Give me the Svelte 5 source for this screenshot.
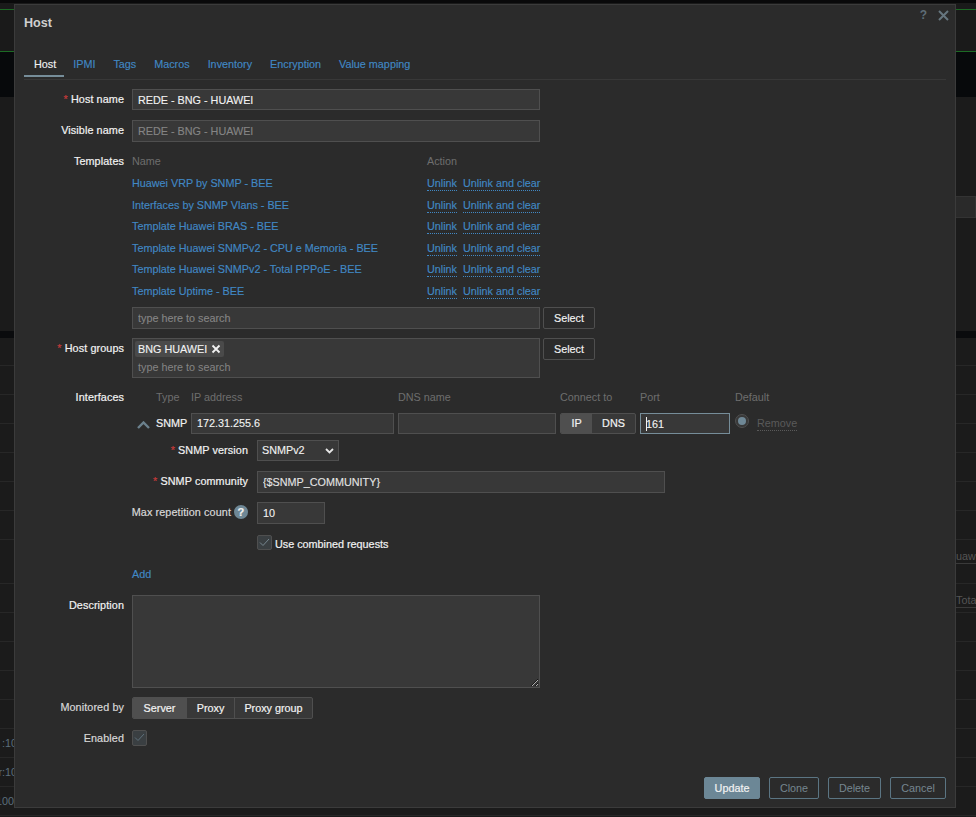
<script>
  const tabs = ['Host', 'IPMI', 'Tags', 'Macros', 'Inventory', 'Encryption', 'Value mapping'];
  const templates = [
    'Huawei VRP by SNMP - BEE',
    'Interfaces by SNMP Vlans - BEE',
    'Template Huawei BRAS - BEE',
    'Template Huawei SNMPv2 - CPU e Memoria - BEE',
    'Template Huawei SNMPv2 - Total PPPoE - BEE',
    'Template Uptime - BEE'
  ];
  const bgRows = [
    { h: 28 }, { h: 29 }, { h: 29 }, { h: 29 }, { h: 29 }, { h: 29 }, { h: 29 },
    { h: 44, right: 'uaw', top: true },
    { h: 29, right: 'Tota', top: true },
    { h: 29 }, { h: 29 }, { h: 29 }, { h: 29 },
    { h: 29, left: ':10', cut: true }, { h: 29, left: 'r:10', cut: true }, { h: 29, left: '100' }
  ];
</script>

<div class="page">
  <div class="bg">
    <div class="strip"></div>
    <div class="bg-green1"></div>
    <div class="bg-green2"></div>
    <div class="bg-upper">
      <div class="bg-field"></div>
    </div>
    <div class="bg-band"></div>
    {#each bgRows as r}
      <div class="bg-row" class:top={r.top} style="height:{r.h}px">
        <span class="bg-left"><span class:cut={r.cut}>{r.left ?? ''}</span></span>
        {#if r.right}<span class="bg-right">{r.right}</span>{/if}
      </div>
    {/each}
  </div>

  <div class="modal">
    <div class="head-icons">
      <span class="help">?</span>
      <svg width="11" height="11" viewBox="0 0 11 11"><path d="M1 1l9 9M10 1l-9 9" stroke="#66767f" stroke-width="2" fill="none"/></svg>
    </div>
    <h1>Host</h1>
    <nav class="tabs">
      {#each tabs as t, i}
        <span class="tab" class:active={i === 0}>{t}</span>
      {/each}
    </nav>

    <div class="form">
      <div class="row r-host">
        <div class="lbl"><i>*</i> Host name</div>
        <input class="field w408 h21" value="REDE - BNG - HUAWEI" />
      </div>
      <div class="row r-visible">
        <div class="lbl">Visible name</div>
        <input class="field w408 h22 dim" value="REDE - BNG - HUAWEI" />
      </div>

      <div class="row r-templates">
        <div class="lbl">Templates</div>
        <div>
          <div class="tpl-row th"><span>Name</span><span>Action</span></div>
          {#each templates as t}
            <div class="tpl-row">
              <span class="link">{t}</span>
              <span class="actions"><span class="dot">Unlink</span><span class="dot">Unlink and clear</span></span>
            </div>
          {/each}
          <div class="with-btn tpl-search">
            <input class="field w408 h22" placeholder="type here to search" />
            <button class="btn-select">Select</button>
          </div>
        </div>
      </div>

      <div class="row r-groups">
        <div class="lbl"><i>*</i> Host groups</div>
        <div class="with-btn">
          <div class="multi">
            <span class="tag">BNG HUAWEI
              <svg width="10" height="10" viewBox="0 0 10 10"><path d="M1.5 1.5l7 7M8.5 1.5l-7 7" stroke="#f2f2f2" stroke-width="1.8" fill="none"/></svg>
            </span>
            <span class="ph">type here to search</span>
          </div>
          <button class="btn-select">Select</button>
        </div>
      </div>

      <div class="row r-if">
        <div class="lbl lbl-if">Interfaces</div>
        <div>
          <div class="if-grid if-head">
            <span></span><span>Type</span><span>IP address</span><span>DNS name</span><span>Connect to</span><span>Port</span><span class="def">Default</span>
          </div>
          <div class="if-grid if-body">
            <svg class="chev" width="13" height="8" viewBox="0 0 13 8"><path d="M1 7l5.5-5.5L12 7" stroke="#6b818d" stroke-width="2.4" fill="none"/></svg>
            <span class="snmp">SNMP</span>
            <input class="field h21 full" value="172.31.255.6" />
            <input class="field h21 full" />
            <div class="seg h21">
              <span class="on s-ip">IP</span><span class="s-dns">DNS</span>
            </div>
            <div class="field h21 full port"><span class="caret"></span>161</div>
            <div class="def-cell">
              <span class="radio"><b></b></span>
              <span class="remove">Remove</span>
            </div>
          </div>

          <div class="sub s1">
            <div class="sl"><i>*</i> SNMP version</div>
            <div class="sel">
              <select class="field h21"><option>SNMPv2</option></select>
              <svg width="9" height="6" viewBox="0 0 9 6"><path d="M1 1l3.5 3.5L8 1" stroke="#e6e6e6" stroke-width="1.8" fill="none"/></svg>
            </div>
          </div>
          <div class="sub s2">
            <div class="sl up"><i>*</i> SNMP community</div>
            <input class="field h22 w408 soft" value={'{$SNMP_COMMUNITY}'} />
          </div>
          <div class="sub s3">
            <div class="sl up soft-l">Max repetition count <span class="q">?</span></div>
            <input class="field h22 w68" value="10" />
          </div>
          <div class="sub s4">
            <div class="sl"></div>
            <label class="chk-line">
              <span class="chk c15">
                <svg width="11" height="9" viewBox="0 0 11 9"><path d="M1 4.5l3 3L10 1" stroke="#76868f" stroke-width="1" fill="none"/></svg>
              </span>
              <span class="chk-text">Use combined requests</span>
            </label>
          </div>
          <div class="add"><span class="link">Add</span></div>
        </div>
      </div>

      <div class="row r-desc">
        <div class="lbl">Description</div>
        <textarea class="area"></textarea>
      </div>

      <div class="row r-mon">
        <div class="lbl soft-l">Monitored by</div>
        <div class="seg seg-mon">
          <span class="on m1">Server</span><span class="m2">Proxy</span><span class="m3">Proxy group</span>
        </div>
      </div>

      <div class="row r-en">
        <div class="lbl lbl-en soft-l">Enabled</div>
        <span class="chk c16">
          <svg width="11" height="9" viewBox="0 0 11 9"><path d="M1 4.5l3 3L10 1" stroke="#5d6f7a" stroke-width="1" fill="none"/></svg>
        </span>
      </div>
    </div>

    <footer>
      <button class="primary">Update</button>
      <button class="ghost b-clone">Clone</button>
      <button class="ghost b-del">Delete</button>
      <button class="ghost b-can">Cancel</button>
    </footer>
  </div>
</div>

<style>
  :global(body) { margin: 0; background: #1a1a1a; }
  .page {
    position: relative;
    width: 976px;
    height: 817px;
    overflow: hidden;
    font: 10.8px/14px "Liberation Sans", Arial, sans-serif;
    color: #f2f2f2;
  }

  /* dimmed page behind the dialog */
  .bg { height: 817px; background: #1b1b1b; overflow: hidden; }
  .strip { height: 3px; background: #09090a; }
  .bg-green1 { height: 6px; border-bottom: 1px solid #1c6a24; background: #1a1a1a; }
  .bg-green2 { height: 41px; border-bottom: 1px solid #1c6a24; background: #1a1a1a; }
  .bg-upper {
    height: 279px;
    background: linear-gradient(#07090b 0, #07090b 45px, #1b1b1b 45px);
    display: flow-root;
  }
  .bg-field {
    margin: 144px 0 0 956px;
    width: 19px;
    height: 20px;
    background: #2a2a2a;
    border: 1px solid #333;
    border-left: 0;
  }
  .bg-band { height: 7px; background: #0a0b0d; }
  .bg-row {
    box-sizing: border-box;
    display: flex;
    justify-content: space-between;
    align-items: center;
    border-bottom: 1px solid #272727;
    color: #5c6f7c;
    background: #1b1b1b;
  }
  .bg-row.top { align-items: flex-start; padding-top: 9px; }
  .bg-left { width: 14px; overflow: hidden; white-space: nowrap; display: flex; justify-content: flex-end; }
  .bg-left span { flex: none; }
  .bg-left .cut { margin-right: -3px; }
  .bg-right { width: 20px; overflow: hidden; color: #555; border-bottom: 1px solid #3a3a3a; }

  /* dialog */
  .modal {
    position: absolute;
    left: 14px;
    top: 4px;
    width: 942px;
    height: 804px;
    box-sizing: border-box;
    background: #2b2b2b;
    border: 1px solid #3b3b3b;
    display: flex;
    flex-direction: column;
    padding: 0 9px;
  }
  .head-icons {
    position: absolute;
    top: 3px;
    right: 6px;
    display: flex;
    align-items: center;
    gap: 11px;
  }
  .help { font-weight: bold; font-size: 12px; color: #5e6d76; }
  h1 {
    margin: 10px 0 0;
    font-size: 12.6px;
    line-height: 16px;
    font-weight: bold;
    color: #cfcfcf;
  }
  .tabs {
    margin-top: 20px;
    height: 28px;
    border-bottom: 1px solid #383838;
    display: flex;
  }
  .tab {
    padding: 6px 8px 4px 10px;
    height: 14px;
    color: #4188c4;
    border-bottom: 2px solid transparent;
    line-height: 14px;
    -webkit-text-stroke: 0.15px;
  }
  .tab.active { color: #f2f2f2; border-bottom-color: #768d99; margin-right: -1px; }

  .form { padding-top: 9px; }
  .row { display: grid; grid-template-columns: 100px 1fr; column-gap: 8px; }
  .lbl { text-align: right; padding-top: 3px; white-space: nowrap; letter-spacing: 0.1px; -webkit-text-stroke: 0.2px; }
  .lbl i, .sl i { color: #c43a3a; font-style: normal; }
  .soft-l { color: #d8d8d8; }

  .field {
    box-sizing: border-box;
    background: #383838;
    border: 1px solid #4f4f4f;
    color: #f2f2f2;
    font: inherit;
    padding: 0 5px;
    margin: 0;
    outline: none;
    display: block;
    -webkit-text-stroke: 0.12px;
  }
  .field::placeholder { color: #858585; opacity: 1; }
  .h21 { height: 21px; }
  .h22 { height: 22px; }
  .w408 { width: 408px; }
  .w68 { width: 68px; }
  .full { width: 100%; }
  .dim { color: #858585; }
  .soft { color: #e4e4e4; }

  .r-visible { margin-top: 10px; }
  .r-templates { margin-top: 8.6px; }
  .tpl-row {
    display: grid;
    grid-template-columns: 295px 1fr;
    height: 21.6px;
    align-items: center;
  }
  .th { color: #6e6e6e; }
  .link { color: #4188c4; -webkit-text-stroke: 0.15px; }
  .actions { display: flex; gap: 6px; color: #4188c4; -webkit-text-stroke: 0.15px; }
  .dot { border-bottom: 1px dotted #4188c4; height: 14px; margin-top: 1px; }
  .with-btn { display: flex; align-items: flex-start; gap: 3px; }
  .tpl-search { margin-top: 5.2px; }
  .btn-select {
    box-sizing: border-box;
    width: 52px;
    height: 22px;
    background: #2b2b2b;
    border: 1px solid #4f4f4f;
    border-radius: 2px;
    color: #f2f2f2;
    font: inherit;
    padding: 0;
    -webkit-text-stroke: 0.15px;
  }
  .r-groups { margin-top: 9px; }
  .multi {
    box-sizing: border-box;
    width: 408px;
    height: 40px;
    background: #383838;
    border: 1px solid #4f4f4f;
    padding: 2px;
    display: flex;
    flex-direction: column;
    align-items: flex-start;
  }
  .tag {
    box-sizing: border-box;
    height: 16px;
    width: 89px;
    background: #4a4a4a;
    border-radius: 2px;
    padding: 1px 3px;
    display: flex;
    align-items: center;
    justify-content: space-between;
    white-space: nowrap;
    -webkit-text-stroke: 0.12px;
  }
  .ph { color: #858585; padding: 3px 3px 0; }

  .r-if { margin-top: 11px; }
  .lbl-if { padding-top: 1px; }
  .if-grid {
    display: grid;
    grid-template-columns: 20px 31px 203px 158px 76px 90px 1fr;
    column-gap: 4px;
    align-items: center;
  }
  .if-head { color: #6e6e6e; height: 16px; white-space: nowrap; }
  .def { margin-left: 1px; }
  .if-body { margin-top: 8px; }
  .chev { margin: 4px 0 0 5px; }
  .snmp { margin-top: -1px; -webkit-text-stroke: 0.2px; }
  .seg {
    box-sizing: border-box;
    display: flex;
    background: #383838;
    border: 1px solid #4f4f4f;
    border-radius: 2px;
    overflow: hidden;
    line-height: 19px;
    -webkit-text-stroke: 0.2px;
  }
  .seg span { text-align: center; }
  .seg .on { background: #4f4f4f; }
  .s-ip { width: 31px; }
  .s-dns { flex: 1; }
  .port { border-color: #768d99; line-height: 20px; }
  .caret {
    display: inline-block;
    width: 1px;
    height: 14px;
    margin-right: -1px;
    background: #f2f2f2;
    vertical-align: -3px;
  }
  .def-cell { display: flex; align-items: center; gap: 8px; margin-left: 1px; }
  .radio {
    box-sizing: border-box;
    width: 14px;
    height: 14px;
    border-radius: 50%;
    background: #383838;
    border: 1px solid #4f4f4f;
    display: flex;
    align-items: center;
    justify-content: center;
    margin-top: -4px;
  }
  .radio b { width: 8px; height: 8px; border-radius: 50%; background: #6f8896; }
  .remove { color: #5a5a5a; border-bottom: 1px dotted #5a5a5a; height: 14px; margin-top: 1px; }

  .sub { display: grid; grid-template-columns: 116px 1fr; column-gap: 9px; align-items: center; }
  .sl { text-align: right; white-space: nowrap; display: flex; justify-content: flex-end; align-items: center; gap: 3px; letter-spacing: 0.1px; -webkit-text-stroke: 0.2px; }
  .sl.up { margin-top: -2px; }
  .s1 { margin-top: 6px; }
  .s2 { margin-top: 10px; }
  .s3 { margin-top: 9px; }
  .s4 { margin-top: 11px; }
  .sel { position: relative; width: 82px; }
  .sel select { width: 82px; appearance: none; -webkit-appearance: none; padding-left: 4px; border-radius: 0; }
  .sel svg { position: absolute; right: 5px; top: 8px; pointer-events: none; }
  .q {
    flex: none;
    width: 14px;
    height: 14px;
    border-radius: 50%;
    background: #6f8896;
    color: #f2f2f2;
    font-weight: bold;
    text-align: center;
    line-height: 14px;
    font-size: 11px;
  }
  .chk-line { display: flex; align-items: center; gap: 3px; height: 15px; }
  .chk-text { padding-top: 3px; -webkit-text-stroke: 0.2px; }
  .chk {
    box-sizing: border-box;
    display: flex;
    align-items: center;
    justify-content: center;
    background: #3a3f42;
    border: 1px solid #4f4f4f;
    border-radius: 2px;
  }
  .c15 { width: 15px; height: 15px; }
  .c16 { width: 15px; height: 16px; }
  .add { margin-top: 17px; height: 14px; }

  .r-desc { margin-top: 14px; }
  .area {
    box-sizing: border-box;
    width: 408px;
    height: 93px;
    background: #383838;
    border: 1px solid #4f4f4f;
    margin: 0;
    display: block;
    outline: none;
  }
  .r-mon { margin-top: 9px; }
  .seg-mon { width: 181px; height: 22px; line-height: 21px; }
  .seg-mon span + span { border-left: 1px solid #4f4f4f; }
  .m1 { width: 53px; }
  .m2 { width: 47px; }
  .m3 { flex: 1; }
  .r-en { margin-top: 11px; align-items: center; }
  .lbl-en { padding-top: 0; }

  footer {
    margin-top: auto;
    margin-bottom: 8px;
    display: flex;
    justify-content: flex-end;
    gap: 9px;
  }
  footer button {
    box-sizing: border-box;
    height: 22px;
    border-radius: 2px;
    font: inherit;
    padding: 0;
  }
  .primary { width: 56px; background: #6c8796; border: 1px solid #6c8796; color: #f2f2f2; -webkit-text-stroke: 0.2px; }
  .ghost { background: #2b2b2b; border: 1px solid #5b7583; color: #768690; }
  .b-clone { width: 50px; }
  .b-del { width: 53px; }
  .b-can { width: 56px; }
</style>
